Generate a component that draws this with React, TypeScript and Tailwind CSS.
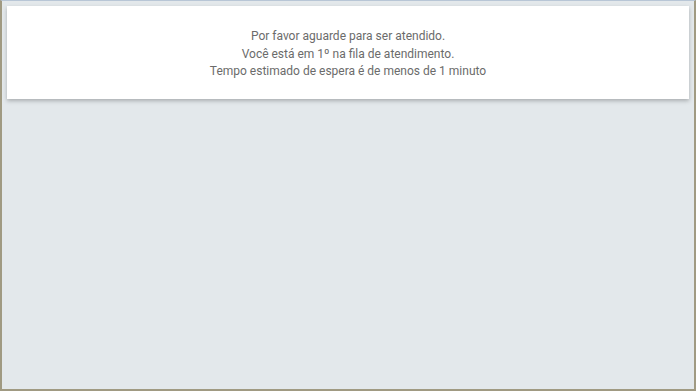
export default function App() {
  return (
    <div className="w-[696px] h-[391px] bg-[#e3e8eb] border-t border-t-[#b8c6d6] border-x-2 border-x-[#a09a82] border-b-2 border-b-[#a09a82] px-[5px] pt-[5px] font-['Roboto',sans-serif]">
      <div className="bg-white h-[93px] shadow-[0_2px_4px_rgba(0,0,0,0.25)] flex flex-col items-center justify-center pt-[4px] text-[12px] leading-[17.5px] text-[#6b6b6b]">
        <p>Por favor aguarde para ser atendido.</p>
        <p>Você está em 1º na fila de atendimento.</p>
        <p>Tempo estimado de espera é de menos de 1 minuto</p>
      </div>
    </div>
  );
}
